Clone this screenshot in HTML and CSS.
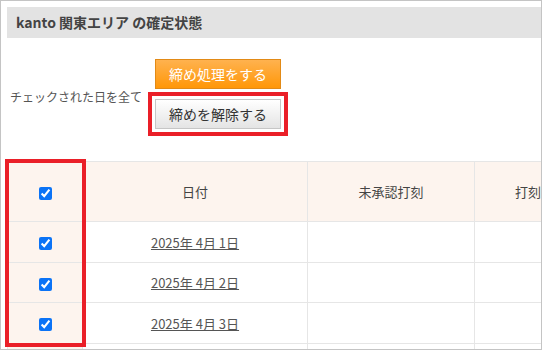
FILE: index.html
```html
<!DOCTYPE html>
<html lang="ja">
<head>
<meta charset="utf-8">
<link rel="stylesheet" href="styles.css">
</head>
<body>
<div class="frame">
  <div class="inner">
    <div class="title">kanto 関東エリア の確定状態</div>
    <div class="actions">
      <span class="label">チェックされた日を全て</span>
      <div class="buttons">
        <button class="btn btn-orange" type="button">締め処理をする</button>
        <button class="btn btn-gray" type="button">締めを解除する</button>
      </div>
    </div>
    <div class="table-wrap">
      <table class="days">
        <thead>
          <tr>
            <th class="c-check"><input type="checkbox" checked></th>
            <th class="c-date">日付</th>
            <th class="c-un">未承認打刻</th>
            <th class="c-punch">打刻</th>
          </tr>
        </thead>
        <tbody>
          <tr>
            <td class="c-check"><input type="checkbox" checked></td>
            <td><a href="#" class="date">2025年 4月 1日</a></td>
            <td></td>
            <td></td>
          </tr>
          <tr class="r2">
            <td class="c-check"><input type="checkbox" checked></td>
            <td><a href="#" class="date">2025年 4月 2日</a></td>
            <td></td>
            <td></td>
          </tr>
          <tr>
            <td class="c-check"><input type="checkbox" checked></td>
            <td><a href="#" class="date">2025年 4月 3日</a></td>
            <td></td>
            <td></td>
          </tr>
          <tr>
            <td class="c-check"></td>
            <td></td>
            <td></td>
            <td></td>
          </tr>
        </tbody>
      </table>
      <div class="highlight"></div>
    </div>
  </div>
</div>
</body>
</html>
```

FILE: styles.css
```css
html, body {
  margin: 0;
  padding: 0;
  background: #ffffff;
}

body {
  font-family: "Noto Sans CJK JP", "Noto Sans", sans-serif;
  color: #444;
}

.frame {
  width: 542px;
  height: 350px;
  box-sizing: border-box;
  border: 1px solid #c4c4c4;
  padding: 6px 0 0 6px;
  overflow: hidden;
}

.inner {
  width: 620px;
}

.title {
  height: 31px;
  line-height: 31px;
  background: #e3e3e3;
  padding-left: 9px;
  font-size: 14px;
  font-weight: bold;
  color: #444;
}

.actions {
  display: flex;
  align-items: center;
  gap: 13px;
  margin-top: 21px;
  padding-left: 3px;
}

.label {
  font-size: 12px;
  color: #555;
  padding-top: 4px;
}

.buttons {
  display: flex;
  flex-direction: column;
  gap: 10px;
}

.btn {
  width: 126px;
  height: 30px;
  box-sizing: border-box;
  padding: 0;
  font-family: "Noto Sans CJK JP", "Noto Sans", sans-serif;
  font-size: 14px;
  border-radius: 0;
  cursor: pointer;
}

.btn-orange {
  background: linear-gradient(#ffb24f, #ff9708);
  border: 1px solid #e28a16;
  color: #ffffff;
}

.btn-gray {
  background: linear-gradient(#ffffff, #e4e4e4);
  border: 1px solid #c6c6c6;
  color: #333;
  outline: 4px solid #ea1f28;
  outline-offset: 3px;
}

.table-wrap {
  position: relative;
  margin-top: 32px;
  width: 570px;
}

.days {
  border-collapse: collapse;
  table-layout: fixed;
  width: 570px;
  font-size: 13px;
}

.days th,
.days td {
  border: 1px solid #e6e6e6;
  text-align: center;
  vertical-align: middle;
  padding: 0;
}

.days th {
  height: 59px;
  background: #fdf4ee;
  font-weight: normal;
  color: #444;
}

.days td {
  height: 40px;
}

.days .r2 td {
  height: 39px;
}

.days .c-check {
  width: 74px;
  background: #fdf4ee;
}

.days .c-date {
  width: 224px;
}

.days .c-un {
  width: 166px;
}

.days .c-punch {
  width: 106px;
}

.days input[type="checkbox"] {
  width: 13px;
  height: 13px;
  margin: 0;
  vertical-align: middle;
  accent-color: #0b73f6;
}

.date {
  color: #555;
  text-decoration: underline;
}

.highlight {
  position: absolute;
  left: -2px;
  top: -2px;
  width: 81px;
  height: 188px;
  box-sizing: border-box;
  border: 4px solid #ea1f28;
}
```
